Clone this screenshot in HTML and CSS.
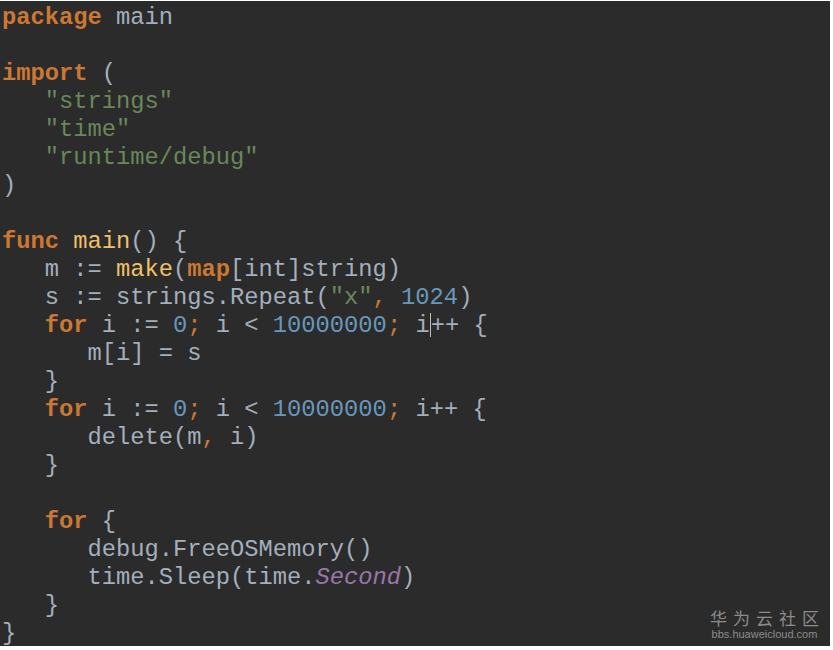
FILE: index.html
```html
<!DOCTYPE html>
<html>
<head>
<meta charset="utf-8">
<link rel="stylesheet" href="styles.css">
</head>
<body>
<div class="editor">
<pre class="code"><span class="kw">package</span> main

<span class="kw">import</span> (
   <span class="str">"strings"</span>
   <span class="str">"time"</span>
   <span class="str">"runtime/debug"</span>
)

<span class="kw">func</span> <span class="fn">main</span>() {
   m := <span class="fn">make</span>(<span class="kw">map</span>[int]string)
   s := strings.Repeat(<span class="str">"x"</span><span class="op">,</span> <span class="num">1024</span>)
   <span class="kw">for</span> i := <span class="num">0</span><span class="op">;</span> i &lt; <span class="num">10000000</span><span class="op">;</span> i<span class="caret"></span>++ {
      m[i] = s
   }
   <span class="kw">for</span> i := <span class="num">0</span><span class="op">;</span> i &lt; <span class="num">10000000</span><span class="op">;</span> i++ {
      delete(m<span class="op">,</span> i)
   }

   <span class="kw">for</span> {
      debug.FreeOSMemory()
      time.Sleep(time.<span class="cst">Second</span>)
   }
}</pre>
<div class="watermark">
<div class="wm-title">华为云社区</div>
<div class="wm-url">bbs.huaweicloud.com</div>
</div>
</div>
</body>
</html>
```
FILE: styles.css
```css
html, body {
  margin: 0;
  padding: 0;
  background: #ffffff;
}
.editor {
  position: relative;
  width: 830px;
  height: 645px;
  margin-top: 1px;
  background: #2b2b2b;
  overflow: hidden;
}
.code {
  margin: 0;
  padding: 3px 0 0 2px;
  font-family: "Liberation Mono", "Courier New", monospace;
  font-size: 23.75px;
  line-height: 28px;
  color: #a3afbc;
  white-space: pre;
}
.kw { color: #cc7832; font-weight: bold; }
.op { color: #cc7832; }
.str { color: #6a8759; }
.num { color: #6897bb; }
.fn { color: #f0c068; }
.cst { color: #9876aa; font-style: italic; }
.caret {
  display: inline-block;
  width: 0;
  height: 24px;
  border-left: 1px solid #bbbbbb;
  vertical-align: -5px;
}
.watermark {
  position: absolute;
  right: 11px;
  bottom: 6px;
  color: #8c8c8c;
  font-family: "Noto Sans CJK SC", "Liberation Sans", sans-serif;
  text-align: center;
}
.wm-title {
  font-size: 17px;
  letter-spacing: 6px;
  line-height: 20px;
  margin-right: -6px;
}
.wm-url {
  font-family: "Liberation Sans", sans-serif;
  font-size: 11px;
  line-height: 12px;
}
```
